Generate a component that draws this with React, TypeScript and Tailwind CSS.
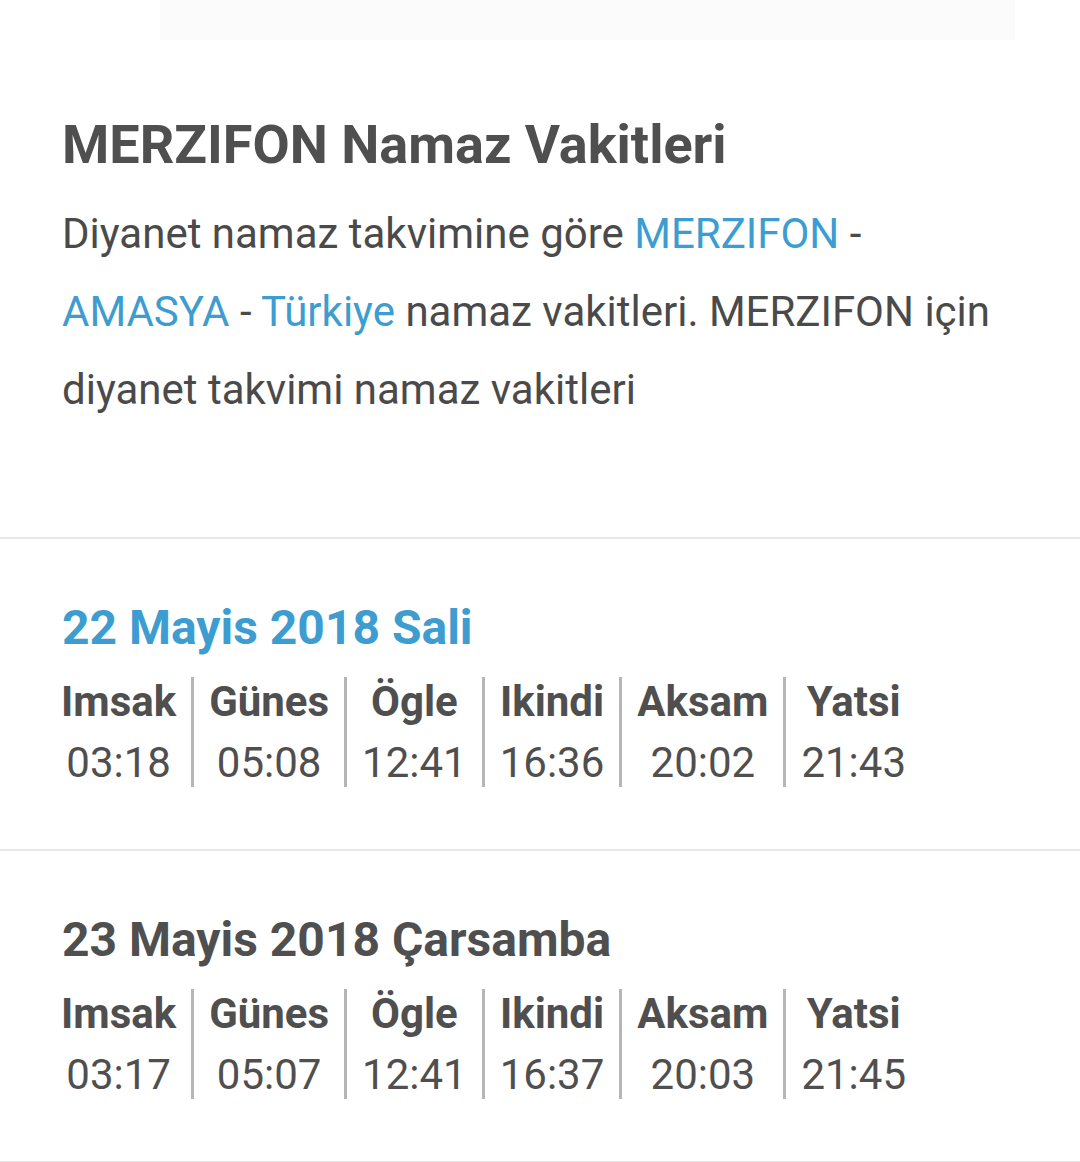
const days = [
  {
    date: "22 Mayis 2018 Sali",
    today: true,
    times: ["03:18", "05:08", "12:41", "16:36", "20:02", "21:43"],
  },
  {
    date: "23 Mayis 2018 Çarsamba",
    today: false,
    times: ["03:17", "05:07", "12:41", "16:37", "20:03", "21:45"],
  },
];

const names = ["Imsak", "Günes", "Ögle", "Ikindi", "Aksam", "Yatsi"];

function DayBlock({ date, today, times }: { date: string; today: boolean; times: string[] }) {
  return (
    <div className="px-[62px] pt-[61px] pb-[62px] border-b-2 border-[#e6e6e6]">
      <h3
        className={`text-[48px] leading-[56px] font-bold ${today ? "text-[#3d9dd0]" : "text-[#4f4f4f]"}`}
      >
        {date}
      </h3>
      <div className="flex mt-[21px] -ml-[16px]">
        {names.map((n, i) => (
          <div
            key={n}
            className={`px-[15px] text-center h-[110px] ${i < names.length - 1 ? "border-r-[3px] border-[#b5b5b5]" : ""}`}
          >
            <div className="text-[42px] leading-[50px] font-bold text-[#4f4f4f]">{n}</div>
            <div className="text-[42px] leading-[48px] mt-[12px] text-[#4f4f4f]">{times[i]}</div>
          </div>
        ))}
      </div>
    </div>
  );
}

export default function App() {
  return (
    <div className="min-h-screen bg-white font-['Roboto',sans-serif] text-[#4f4f4f]">
      <div className="h-[40px] mx-[160px] w-[855px] bg-[#fbfbfb]" />

      <div className="px-[62px] pt-[73px] pb-[108px] border-b-2 border-[#e6e6e6]">
        <h1 className="text-[54px] leading-[64px] font-bold">MERZIFON Namaz Vakitleri</h1>
        <p className="mt-[18px] text-[42px] leading-[78px] text-[#4a4a4a]">
          Diyanet namaz takvimine göre <a className="text-[#3d9dd0]">MERZIFON</a> -{" "}
          <a className="text-[#3d9dd0]">AMASYA</a> - <a className="text-[#3d9dd0]">Türkiye</a> namaz
          vakitleri. MERZIFON için diyanet takvimi namaz vakitleri
        </p>
      </div>

      {days.map((d) => (
        <DayBlock key={d.date} {...d} />
      ))}
    </div>
  );
}
